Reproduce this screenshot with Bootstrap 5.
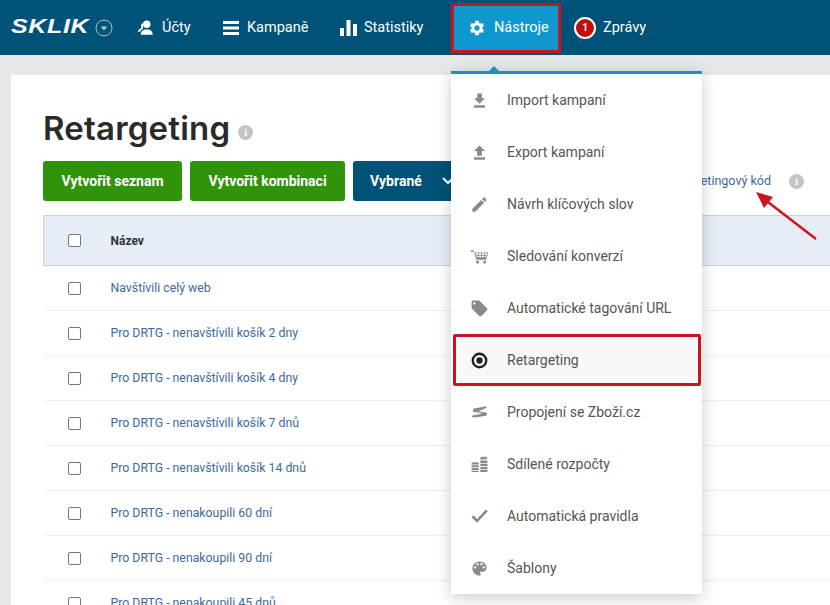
<!DOCTYPE html>
<html lang="cs">
<head>
    <meta charset="UTF-8">
    <meta name="viewport" content="width=device-width, initial-scale=1.0">
    <title>Sklik - Retargeting</title>
    <link href="https://cdn.jsdelivr.net/npm/bootstrap@5.3.0/dist/css/bootstrap.min.css" rel="stylesheet">
    <script src="https://cdn.jsdelivr.net/npm/bootstrap@5.3.0/dist/js/bootstrap.bundle.min.js"></script>
    <style>
        html, body { height: 605px; overflow: hidden; }
        body { background: #e6e8e8; font-family: Roboto, "Liberation Sans", sans-serif; color: #333; }
        .top-bar { background: #005278; height: 55px; padding: 0; flex-wrap: nowrap; justify-content: flex-start; }
        .logo-box { width: 137px; height: 55px; padding-left: 11px; flex: none; }
        .logo-text { font: italic 700 20px/1 "Liberation Sans", sans-serif; color: #fff; letter-spacing: .5px; margin-top: -3px; transform: scaleX(1.25); transform-origin: left; }
        .top-nav { flex-direction: row; height: 55px; }
        .top-nav .nav-link { color: #fff; font-size: 14.5px; height: 55px; display: flex; align-items: center; gap: 7px; padding: 0; }
        .top-nav .nav-link svg { fill: #fff; }
        .item-ucty { width: 85px; }
        .item-kampane { width: 118px; }
        .item-stat { width: 111px; }
        .top-nav .nav-link.tools-link { background: #0f97cf; border: 3px solid #c8141e; width: 110px; height: 50px; margin-top: 3px; padding-left: 14px; gap: 8px; color: #fff; }
        .item-zpravy { margin-left: 13px; }
        .msg-count { width: 22px; height: 22px; border-radius: 50%; background: #c00d0d; border: 2px solid #fff; color: #fff; font-size: 10px; font-weight: 700; display: flex; align-items: center; justify-content: center; }
        .tools-menu.dropdown-menu { position: absolute; top: 71px; left: 0; width: 251px; margin: 0; padding: 0; border: 0; border-top: 3px solid #1d8fc0; border-radius: 0; box-shadow: 0 4px 16px rgba(0,0,0,.2); z-index: 20; }
        .tools-menu::before { content: ""; position: absolute; top: -8px; left: 37px; border-left: 6px solid transparent; border-right: 6px solid transparent; border-bottom: 6px solid #1d8fc0; }
        .tools-menu .dropdown-item { height: 52px; display: flex; align-items: center; padding: 0 0 0 19px; gap: 18px; font-size: 14px; color: #555; }
        .tools-menu .dropdown-item svg { width: 19px; height: 19px; fill: #8a8a8a; flex: none; }
        .tools-menu .dropdown-item.picked { background: #f8f8f8; border: 3px solid #c8141e; border-radius: 2px; margin-left: 2px; width: 248px; padding-left: 14px; }
        .tools-menu .dropdown-item.picked svg { fill: #222; }
        .main-panel { background: #fff; margin: 20px 0 0 11px; padding: 33px 0 0 32px; height: 530px; }
        .page-title { font-family: Inter, Roboto, sans-serif; font-size: 33px; font-weight: 600; line-height: 40px; color: #2a2a2a; margin: 0; letter-spacing: .2px; }
        .info-dot { width: 15px; height: 15px; border-radius: 50%; background: #c4c4c4; color: #fff; font: 700 11px/15px "Liberation Serif", serif; text-align: center; display: inline-block; flex: none; }
        .tool-row { margin-top: 13px; height: 40px; padding-right: 26px; }
        .btn-make, .btn-picked { height: 40px; border-radius: 3px; border: 0; color: #fff; font-size: 14px; font-weight: 700; padding: 0; display: flex; align-items: center; justify-content: center; }
        .btn-make { background: #2f9409; }
        .btn-make:hover { background: #2f9409; color: #fff; }
        .btn-picked { background: #005278; width: 120px; padding-left: 17px; justify-content: flex-start; gap: 20px; }
        .btn-picked:hover { background: #005278; color: #fff; }
        .code-link { font-size: 12.5px; color: #3c6aa0; text-decoration: none; margin-right: 10px; }
        .list-table { margin: 14px 0 0; table-layout: fixed; width: 787px; }
        .list-table th, .list-table td { height: 45px; padding: 0; vertical-align: middle; font-size: 12.3px; border-bottom: 1px solid #eee; }
        .list-table thead th { height: 50px; background: #e6edf6; border-top: 1px solid #c5d3df; border-bottom: 1px solid #c5d3df; font-weight: 700; font-size: 12px; color: #333; }
        .list-table thead th:first-child { border-left: 1px solid #c5d3df; }
        .list-table .check-col { width: 67px; padding-left: 24px; }
        .list-table .form-check-input { width: 13px; height: 13px; margin: 0; border-color: #777; border-radius: 2px; display: block; }
        .list-table a { color: #3c6aa0; text-decoration: none; }
        .note-arrow { position: absolute; left: 750px; top: 185px; z-index: 10; }
    </style>
</head>
<body>
    <!-- Top bar -->
    <nav class="navbar top-bar">
        <div class="logo-box d-flex align-items-center gap-2">
            <span class="logo-text">SKLIK</span>
            <svg class="ms-auto me-4" width="18" height="18" viewBox="0 0 18 18"><circle cx="9" cy="9" r="8" fill="none" stroke="#a9c6d6" stroke-width="1"/><path d="M5.5 7.5h7L9 11.5z" fill="#a9c6d6"/></svg>
        </div>
        <ul class="navbar-nav top-nav">
            <li class="nav-item item-ucty">
                <a class="nav-link" href="#"><svg width="18" height="18" viewBox="0 0 24 24"><circle cx="13" cy="7" r="5"/><path d="M5 21c0-4 2-6 5-7h6c3 1 5 3 5 7zM8 5.500C5.500 6 5 8 5.500 10L6 12c-2 .5-4 2-5 5h3c1-2 2-3 4-4z"/></svg>Účty</a>
            </li>
            <li class="nav-item item-kampane">
                <a class="nav-link" href="#"><svg width="18" height="16" viewBox="0 0 18 16"><path d="M1 1h16v3H1zM1 6.500h16v3H1zM1 12h16v3H1z"/></svg>Kampaně</a>
            </li>
            <li class="nav-item item-stat">
                <a class="nav-link" href="#"><svg width="17" height="17" viewBox="0 0 17 17"><path d="M0 9h4v8H0zM6.500 1h4v16h-4zM13 5h4v12h-4z"/></svg>Statistiky</a>
            </li>
            <li class="nav-item position-relative">
                <a class="nav-link tools-link" href="#"><svg width="18" height="18" viewBox="0 0 24 24"><path d="M19.14 12.94c.04-.3.06-.61.06-.94 0-.32-.02-.64-.07-.94l2.03-1.58a.49.49 0 0 0 .12-.61l-1.92-3.32a.488.488 0 0 0-.59-.22l-2.39.96c-.5-.38-1.03-.7-1.62-.94l-.36-2.54a.484.484 0 0 0-.48-.41h-3.84c-.24 0-.43.17-.47.41l-.36 2.54c-.59.24-1.13.57-1.62.94l-2.39-.96c-.22-.08-.47 0-.59.22L2.74 8.87c-.12.21-.08.47.12.61l2.03 1.58c-.05.3-.09.63-.09.94s.02.64.07.94l-2.03 1.58a.49.49 0 0 0-.12.61l1.92 3.32c.12.22.37.29.59.22l2.39-.96c.5.38 1.03.7 1.62.94l.36 2.54c.05.24.24.41.48.41h3.84c.24 0 .44-.17.47-.41l.36-2.54c.59-.24 1.13-.56 1.62-.94l2.39.96c.22.08.47 0 .59-.22l1.92-3.32c.12-.22.07-.47-.12-.61l-2.01-1.58zM12 15.600c-1.980 0-3.600-1.620-3.600-3.600s1.620-3.600 3.600-3.600 3.600 1.620 3.600 3.600-1.620 3.600-3.600 3.600z"/></svg>Nástroje</a>
                <div class="dropdown-menu show tools-menu">
                    <a class="dropdown-item" href="#"><svg viewBox="0 0 24 24"><path d="M19 9h-4V3H9v6H5l7 7 7-7zM5 18v3h14v-3H5z"/></svg>Import kampaní</a>
                    <a class="dropdown-item" href="#"><svg viewBox="0 0 24 24"><path d="M9 16h6v-6h4l-7-7-7 7h4zM5 18h14v3H5z"/></svg>Export kampaní</a>
                    <a class="dropdown-item" href="#"><svg viewBox="0 0 24 24"><path d="M3 17.250V21h3.750L17.810 9.940l-3.750-3.750L3 17.250zM20.710 7.040a1 1 0 0 0 0-1.410l-2.340-2.340a1 1 0 0 0-1.410 0l-1.830 1.830 3.750 3.750 1.830-1.830z"/></svg>Návrh klíčových slov</a>
                    <a class="dropdown-item" href="#"><svg viewBox="0 0 24 24"><path d="M1 4h3.500l1 3H23l-2.500 9H8L5 6H1zM7 8l.5 2H10V8zm4 0v2h3V8zm4 0v2h3V8zm4 0v2h2.200l.5-2zM8 11l.6 2H10v-2zm3 0v2h3v-2zm4 0v2h3v-2zm4 0v2h1.400l.6-2z" fill-rule="evenodd"/><circle cx="9.500" cy="19" r="2"/><circle cx="18.500" cy="19" r="2"/></svg>Sledování konverzí</a>
                    <a class="dropdown-item" href="#"><svg viewBox="0 0 24 24"><path d="M21.410 11.580l-9-9C12.050 2.220 11.550 2 11 2H4c-1.100 0-2 .9-2 2v7c0 .55.22 1.050.59 1.420l9 9c.36.36.86.58 1.410.58s1.050-.22 1.410-.59l7-7c.37-.36.59-.86.59-1.410s-.23-1.060-.59-1.420zM5.500 7a1.500 1.500 0 1 1 0-3 1.500 1.500 0 0 1 0 3z"/></svg>Automatické tagování URL</a>
                    <a class="dropdown-item picked" href="#"><svg viewBox="0 0 24 24"><path d="M12 2a10 10 0 1 0 0 20 10 10 0 0 0 0-20zm0 17a7 7 0 1 1 0-14 7 7 0 0 1 0 14z" fill-rule="evenodd"/><circle cx="12" cy="12" r="4"/></svg>Retargeting</a>
                    <a class="dropdown-item" href="#"><svg viewBox="0 0 24 24"><path d="M5 7c5-1 10-2 15-3l1 2-9 4c-1 .5-1 1 0 1l9 1c1 1 1 3-1 4-4 1-10 2-17 2l-1-2c4-1 8-1.500 12-2.500 1-.3 1-1 0-1l-9-1C3 11 3 8 5 7z"/></svg>Propojení se Zboží.cz</a>
                    <a class="dropdown-item" href="#"><svg viewBox="0 0 24 24"><path d="M13 3c5-1.300 9-.5 9 1s-9 2.300-9 1zM13 7h9v3h-9zM13 11h9v3h-9zM13 15h9v3h-9zM13 19h9v2.500h-9zM2 10c2-1 8-1 9 0v2H2zM2 13h9v2.500H2zM2 16.500h9V19H2zM2 20h9v1.500H2z"/></svg>Sdílené rozpočty</a>
                    <a class="dropdown-item" href="#"><svg viewBox="0 0 24 24"><path d="M9 20L2 13l2.500-2.500L9 15 20 3l2.500 2.500z"/></svg>Automatická pravidla</a>
                    <a class="dropdown-item" href="#"><svg viewBox="0 0 24 24"><path d="M12 3a9 9 0 0 0 0 18c.83 0 1.500-.67 1.500-1.500 0-.39-.15-.74-.39-1.010-.23-.26-.38-.61-.38-.99 0-.83.67-1.500 1.500-1.500H16c2.760 0 5-2.240 5-5 0-4.420-4.030-8-9-8zm-5.500 9a1.500 1.500 0 1 1 0-3 1.500 1.500 0 0 1 0 3zm3-4a1.500 1.500 0 1 1 0-3 1.500 1.500 0 0 1 0 3zm5 0a1.500 1.500 0 1 1 0-3 1.500 1.500 0 0 1 0 3zm3 4a1.500 1.500 0 1 1 0-3 1.500 1.500 0 0 1 0 3z"/></svg>Šablony</a>
                </div>
            </li>
            <li class="nav-item item-zpravy">
                <a class="nav-link" href="#"><span class="msg-count">1</span>Zprávy</a>
            </li>
        </ul>
    </nav>

    <!-- Main content -->
    <div class="main-panel">
        <div class="d-flex align-items-center gap-2">
            <h1 class="page-title">Retargeting</h1>
            <span class="info-dot mt-2">i</span>
        </div>
        <div class="tool-row d-flex align-items-center gap-2">
            <button class="btn btn-make" style="width:139px">Vytvořit seznam</button>
            <button class="btn btn-make" style="width:155px">Vytvořit kombinaci</button>
            <button class="btn btn-picked">Vybrané <svg width="12" height="8" viewBox="0 0 12 8"><path d="M1 1l5 5 5-5" fill="none" stroke="#fff" stroke-width="2"/></svg></button>
            <a class="code-link ms-auto" href="#">Retargetingový kód</a>
            <span class="info-dot">i</span>
        </div>
        <table class="table list-table">
            <thead>
                <tr><th class="check-col"><input class="form-check-input" type="checkbox"></th><th>Název</th></tr>
            </thead>
            <tbody>
                <tr><td class="check-col"><input class="form-check-input" type="checkbox"></td><td><a href="#">Navštívili celý web</a></td></tr>
                <tr><td class="check-col"><input class="form-check-input" type="checkbox"></td><td><a href="#">Pro DRTG - nenavštívili košík 2 dny</a></td></tr>
                <tr><td class="check-col"><input class="form-check-input" type="checkbox"></td><td><a href="#">Pro DRTG - nenavštívili košík 4 dny</a></td></tr>
                <tr><td class="check-col"><input class="form-check-input" type="checkbox"></td><td><a href="#">Pro DRTG - nenavštívili košík 7 dnů</a></td></tr>
                <tr><td class="check-col"><input class="form-check-input" type="checkbox"></td><td><a href="#">Pro DRTG - nenavštívili košík 14 dnů</a></td></tr>
                <tr><td class="check-col"><input class="form-check-input" type="checkbox"></td><td><a href="#">Pro DRTG - nenakoupili 60 dní</a></td></tr>
                <tr><td class="check-col"><input class="form-check-input" type="checkbox"></td><td><a href="#">Pro DRTG - nenakoupili 90 dní</a></td></tr>
                <tr><td class="check-col"><input class="form-check-input" type="checkbox"></td><td><a href="#">Pro DRTG - nenakoupili 45 dnů</a></td></tr>
            </tbody>
        </table>
    </div>

    <!-- Red arrow over the page -->
    <svg class="note-arrow" width="70" height="60" viewBox="0 0 70 60"><path d="M66 54L14 14" stroke="#d0141c" stroke-width="2.500" fill="none"/><path d="M6 7l17 5-9 11z" fill="#d0141c"/></svg>
</body>
</html>
